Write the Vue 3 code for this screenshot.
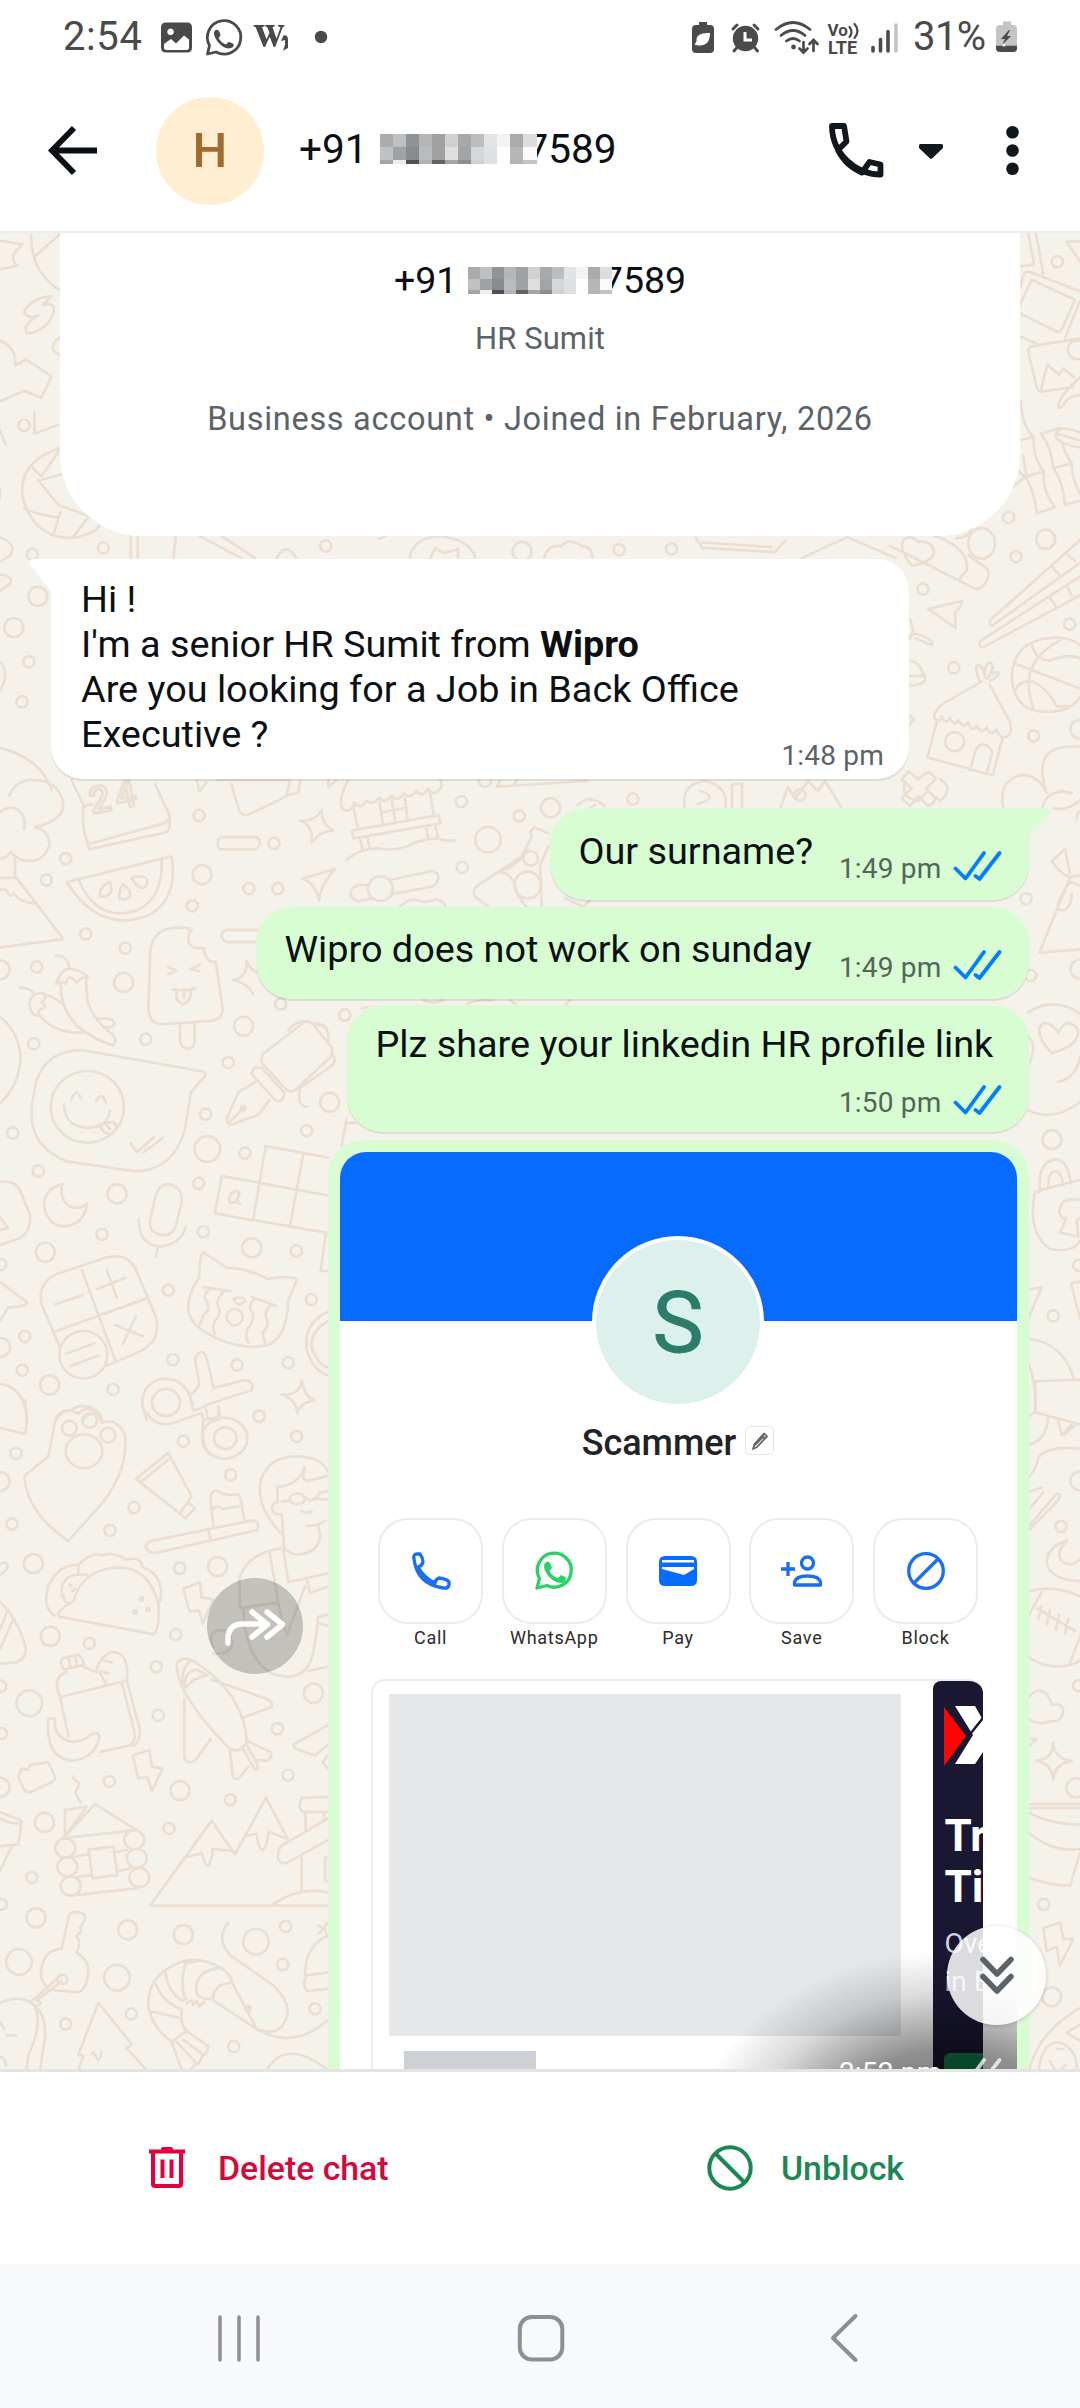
<script setup>
const mosaicTones = [
  ['#a9abad', '#bdbfc1', '#8f9396', '#b4b6b8', '#9fa1a3', '#d0d1d3', '#a6a8aa', '#bbbdbf', '#e2e3e5', '#f3f3f4', '#a9abad', '#dcddde'],
  ['#bfc1c3', '#a0a1a3', '#888c90', '#b9bbbd', '#9fa1a3', '#dfdfe0', '#a3a4a6', '#d5d7d9', '#dfe0e2', '#fefefe', '#b5b7b9', '#fafafa'],
  ['#a2a4a6', '#ededed', '#4d5258', '#b0b2b4', '#5f6468', '#a3a5a7', '#8b8e91', '#cfd1d3', '#dedfe1', '#fefefe', '#b2b4b6', '#c2c3c5'],
]

// Each zone holds doodles drawn in its own units; sx and sy are units per pixel.
const zones = [
  {
    x: 0, y: 780, sx: 3, sy: 2.45,
    small: [[597, 87], [822, 155], [197, 193], [139, 245], [747, 266], [833, 266], [577, 308], [257, 377], [376, 412], [110, 458], [842, 549], [1034, 576], [101, 646], [437, 635], [685, 692], [617, 819], [38, 865], [920, 859], [735, 914], [115, 958], [596, 988], [306, 1113], [610, 1107], [889, 1154], [505, 1250], [934, 1273], [74, 1363], [67, 1446], [519, 1420], [711, 1433], [865, 1428], [339, 1493], [777, 1558], [2, 1187]],
    mid: [[606, 232], [371, 496], [731, 603], [989, 790], [351, 1014], [136, 1157], [755, 1146], [149, 1482], [0, 465], [2, 1390]],
    large: [[622, 904]],
    paths: [
      'M27 38Q50 0 95 0Q180 0 190 60Q190 100 105 115Q150 125 148 160Q130 205 72 197Q45 190 32 175Q20 192 0 193M0 78Q20 65 40 68Q80 80 73 120',
      'M45 190V235L190 390L0 410M0 240H48M0 270Q15 262 22 275Q30 290 42 278Q60 300 108 303',
      'M215 0L250 62Q245 120 262 152Q266 158 275 155L495 105Q512 98 508 85L465 10M262 152L268 170L500 128Q514 120 508 85M250 65L275 60',
      'M200 250L515 187Q535 290 450 330Q300 380 200 250M235 243Q290 350 410 320Q490 290 485 195M330 250Q298 258 300 285Q325 290 335 270ZM368 255Q355 275 358 290Q375 298 392 285Q390 265 368 255ZM395 240Q410 265 430 265Q448 255 440 242Q420 230 395 240Z',
      'M575 365Q445 345 450 440L445 560Q448 600 490 598L635 590Q672 585 667 555L647 445Q620 450 610 412Q565 415 565 390Q565 375 575 365M540 598V640Q545 658 562 658Q583 658 584 640V596M503 457L530 467L505 475M600 452L572 463L598 469M518 513Q550 518 585 511M530 515V535Q538 549 552 549Q572 545 573 514M552 517V533',
      'M168 430Q205 430 208 462M168 500Q185 460 210 462Q245 465 265 485Q245 480 235 492Q230 502 218 485Q200 480 197 500Q185 492 168 500M182 500Q180 560 235 605Q290 640 340 650Q350 640 340 625Q280 590 262 540L258 490M60 508Q90 510 100 522M128 523Q95 520 88 545Q90 578 120 578Q110 565 125 560Q145 555 125 545Q145 530 128 523Q160 530 190 550M120 578Q170 625 255 618M290 585Q345 580 343 600Q335 608 320 605',
      'M250 662L600 713Q622 715 615 725L573 765L555 855Q520 960 400 958L205 935Q85 900 95 800L108 740Q140 660 250 662M192 795Q195 850 262 852Q325 850 330 810M215 783Q228 750 243 780M288 788Q305 760 318 790M298 848Q325 835 345 840Q355 850 340 865Q320 875 298 848M318 843L330 856M392 890L410 912L462 875M430 912L488 878',
      'M915 592L790 670Q780 680 787 695L855 755Q870 768 885 760L990 680Q1000 670 995 655L940 600Q928 590 915 592M945 598Q990 600 985 638M1000 675Q1010 690 995 700L900 755Q890 800 920 800M785 705Q760 700 755 720L820 780Q838 795 852 775V765L785 705M765 740L715 765L680 830Q680 848 700 843L775 820L808 785M690 837L730 804M736 804A6 6 0 1 0 724 804A6 6 0 1 0 736 804',
      'M188 990Q130 1000 133 1048Q145 1095 200 1093Q255 1085 260 1038Q225 1060 195 1035Q178 1010 188 990M465 1025Q475 988 508 990Q550 1000 545 1035L530 1085Q520 1118 485 1115Q445 1108 450 1080ZM417 1075Q415 1140 480 1143Q540 1140 558 1095M475 1143L467 1168M0 985Q45 980 60 1005L90 1065Q95 1105 60 1122L0 1140M0 1072L25 1098L0 1103',
      'M797 897L985 925M797 897L760 1076M665 970L985 1018M665 970L645 1062L985 1110M910 915L870 1093M978 1110L962 1203H985M705 1008Q680 1018 690 1035Q715 1040 718 1010Q690 1000 688 1030M718 1010Q705 1040 722 1038M1040 830L1025 895M1040 840H1065',
      'M290 1178Q375 1150 405 1195L465 1310Q490 1370 420 1400L320 1435M290 1178L170 1210Q110 1235 125 1285L180 1390M245 1200L345 1420M158 1353L440 1270M165 1285L248 1262M292 1247L376 1220M320 1200L350 1267M345 1335L428 1363M408 1315L368 1382M322 1408A72 58 0 1 0 178 1408A72 58 0 1 0 322 1408M200 1405L283 1380M212 1436L295 1410',
      'M680 1195L610 1157Q600 1160 597 1220Q530 1300 600 1345Q700 1400 800 1385Q860 1370 865 1275L890 1225Q888 1212 802 1222Q740 1195 680 1195M612 1243L690 1252M756 1267L828 1288M625 1250Q605 1265 622 1280Q632 1300 610 1310Q605 1330 595 1338M672 1252Q645 1275 655 1290Q665 1310 645 1325Q635 1345 645 1358M765 1270Q740 1290 758 1305Q765 1325 742 1345Q735 1370 745 1378M812 1285Q790 1305 800 1320Q810 1335 788 1355L795 1380M700 1270Q735 1265 735 1277Q715 1295 700 1270M728 1316A24 20 0 1 0 680 1316A24 20 0 1 0 728 1316',
      'M650 0H870L860 40L745 85Q725 90 715 70L695 10M860 38L895 30L900 0M965 73Q950 100 900 100Q940 110 935 153Q960 125 1000 124Q965 110 965 73M905 242L1005 218Q960 260 957 295Q945 250 905 242M665 140H765Q780 142 780 155Q775 170 760 170H665Q652 168 653 155Q655 142 665 140M800 367H680Q665 370 665 382Q668 395 685 397H800M740 445Q742 485 698 490Q740 495 760 525M740 445Q750 465 780 475M590 0L598 28L620 5',
      'M598 1480L585 1420Q590 1400 610 1402Q620 1405 640 1490L735 1470Q765 1475 755 1495L615 1532L625 1568M598 1480Q590 1495 570 1508Q540 1460 480 1468Q420 1485 428 1535L440 1568M570 1508L580 1545L615 1535M655 1535V1568M540 1525A42 33 0 1 0 456 1525A42 33 0 1 0 540 1525M905 1470Q900 1510 845 1505Q890 1520 892 1552Q900 1525 945 1520Q912 1510 905 1470M985 1302Q910 1330 920 1395Q940 1450 985 1458M985 1325Q930 1350 935 1390Q950 1430 985 1440M165 1568Q180 1540 215 1545Q230 1530 265 1535Q305 1545 305 1568M250 1568Q260 1550 285 1555',
      'M0 580Q60 620 62 685Q55 750 0 792M0 1230L82 1280Q80 1290 25 1292L0 1325M0 1478Q75 1490 82 1568',
    ],
    balls: [[262, 801, 110, 88]],
  },
  {
    x: 0, y: 1400, sx: 3, sy: 2.306,
    small: [[777, 38], [550, 95], [890, 84], [48, 123], [692, 173], [402, 248], [36, 286], [330, 301], [539, 388], [268, 561], [527, 541], [469, 615], [475, 727], [832, 758], [328, 880], [864, 865], [691, 922], [507, 988], [95, 1101], [857, 1214], [848, 1302], [197, 1439], [394, 1416], [701, 1491], [945, 1404], [2, 660], [4, 769], [4, 1163]],
    mid: [[0, 188], [100, 377], [653, 384], [151, 545], [940, 676], [540, 901], [133, 974], [108, 1194], [383, 1222], [550, 1233], [0, 893]],
    large: [[88, 699], [57, 1296], [351, 1332], [768, 1249]],
    paths: [
      'M205 325Q80 260 73 175L145 130L165 50Q195 10 235 32Q275 0 305 52Q350 40 375 80Q385 160 310 235ZM0 65L75 78Q85 50 75 0M610 45Q600 100 630 125M440 30Q470 65 520 53L605 30L610 45L660 40L655 15M705 88',
      'M505 122L407 182L540 262L575 222ZM420 190L510 135M548 250L540 262L555 273L585 250L568 238M455 325L755 278Q780 278 773 300L465 353Q435 350 437 335Q445 327 455 325M625 300L632 325M640 290L632 230Q630 205 655 210Q665 220 715 218Q725 225 725 245L735 280M640 250Q655 240 670 252Q700 245 728 245',
      'M165 498Q125 480 145 430Q170 380 235 380Q270 350 310 358Q340 350 380 368Q425 360 427 385Q480 400 483 440Q485 460 475 470Q480 530 460 540L180 500Q160 490 220 465Q240 400 330 388Q450 375 478 480M185 450Q180 405 235 403H260M190 450Q190 470 210 468M235 380V403M208 425L215 430M218 440L226 435',
      'M550 435L600 420L605 455L640 460L608 515L597 485L568 488ZM398 820L448 807L455 845L488 850L455 902L442 870L415 872ZM55 870L65 850L85 853L90 842L145 835L165 870Q165 880 150 883L90 905Q75 905 70 895ZM218 868Q225 880 238 883Q235 895 225 905Q232 915 242 928',
      'M180 685L365 650L405 770Q405 795 380 798L300 812M180 685L205 775M365 650L380 645L418 755Q425 785 400 798M172 665Q165 635 200 628L190 620Q175 600 190 595L235 588Q255 600 250 615L290 628Q290 600 330 582Q385 575 382 640M172 665L182 690M300 630L318 655M308 600L335 605M302 625L325 630M190 622L245 612M205 592L212 618M225 590L232 615M145 735H165Q160 780 215 788Q250 790 275 770Q295 765 298 775Q290 825 215 832Q135 825 145 735',
      'M530 610Q540 590 575 600Q660 640 700 690Q740 740 740 790Q720 815 690 805Q530 680 530 610M555 665Q550 625 590 622Q610 630 622 635Q580 640 555 665M575 600Q545 612 548 650M635 645L805 690Q820 700 815 708L730 732M553 690V825Q560 840 585 832L632 782M690 810L698 868Q705 878 718 872L745 845M740 785L812 812Q818 825 800 832L765 830M725 800L765 852Q775 855 772 840L740 795',
      'M195 945L260 938L195 1005ZM190 1010L285 932L410 992ZM226 1033A30 22 0 1 0 166 1033A30 22 0 1 0 226 1033M232 1077A30 22 0 1 0 172 1077A30 22 0 1 0 232 1077M242 1121A30 22 0 1 0 182 1121A30 22 0 1 0 242 1121M433 1014A30 22 0 1 0 373 1014A30 22 0 1 0 433 1014M440 1057A30 22 0 1 0 380 1057A30 22 0 1 0 440 1057M448 1101A30 22 0 1 0 388 1101A30 22 0 1 0 448 1101M265 1037L340 1030L352 1095L278 1103ZM215 1053L268 1048M342 1043L380 1038M232 1100L275 1095M350 1087L388 1080M215 1143L420 1125',
      'M983 1166H450L635 970L705 1048L798 917L865 1015M555 1055L605 1045Q615 1075 625 1075Q640 1050 637 1035L695 1040M735 1005L770 1000Q775 1038 790 1038Q805 1020 805 995L855 1010M983 965L840 1030Q820 1070 860 1068L983 1015M905 1055V1130M815 1165Q900 1120 983 1135M983 950H910Q890 940 905 918L983 915M917 950V990M972 955V970M983 1055H975V1110H983',
      'M185 1265L208 1185Q230 1175 255 1188Q255 1205 240 1215Q250 1225 230 1235Q245 1250 230 1275Q275 1295 263 1330Q255 1370 220 1365L150 1360Q115 1340 125 1310Q130 1270 185 1265M110 1385L185 1340M105 1380L180 1328M90 1388L103 1380L123 1390L108 1400ZM202 1336A15 11 0 1 0 172 1336A15 11 0 1 0 202 1336M0 1390Q60 1370 103 1395Q130 1440 85 1510L80 1545M103 1395Q140 1420 135 1470L120 1545M0 1435L12 1450M20 1465H48M0 1515Q15 1515 18 1535M235 1510L295 1390L395 1485L380 1495L440 1545M235 1510L250 1512L235 1545M275 1508Q285 1500 287 1515Q300 1530 303 1505',
      'M530 1300Q590 1280 650 1305Q695 1320 695 1342L770 1450L640 1385Q635 1365 660 1350L695 1342M530 1300Q440 1330 445 1400Q460 1450 515 1480L545 1545M555 1300Q540 1350 555 1380M497 1320Q500 1360 545 1385L560 1380M468 1348Q490 1390 545 1405M600 1293L555 1300M650 1310Q580 1320 590 1370Q610 1385 637 1380M455 1410L540 1425M545 1405Q540 1440 560 1455L515 1480M560 1455L625 1490Q625 1505 610 1510L550 1475M530 1480L590 1530L570 1545M610 1510L595 1530M685 1205Q645 1240 690 1280L820 1350Q890 1400 845 1445Q820 1465 770 1450M770 1450Q880 1500 983 1430M800 1545Q860 1470 983 1545M560 1390L575 1385L580 1395L590 1385L598 1398L612 1388M983 1235Q915 1260 915 1325M983 1320L920 1327Q905 1345 920 1363L983 1358M955 1212L970 1220L957 1230M983 1205L972 1215L983 1240',
      'M845 310Q760 240 785 180Q810 130 890 130Q965 130 983 165M830 200Q835 215 832 235Q810 240 820 258Q825 265 845 263Q850 300 852 340Q880 365 920 352Q955 345 960 315L955 290M830 200Q890 200 915 155Q900 185 925 187L983 175M845 235L870 232M915 228A23 12 0 1 0 869 228A23 12 0 1 0 915 228M918 225L930 232L950 225M983 210Q950 212 950 228L983 230M905 255Q915 263 935 257M920 290Q945 292 975 280M720 480L718 410Q745 350 850 342L865 420L983 400M808 350L845 510L862 540L915 430M920 410L930 445L983 430M720 480L832 468M730 480Q735 600 820 632Q930 660 945 560L955 500L983 495M955 515L983 520M925 625L983 615M640 570Q620 540 655 530Q690 530 697 560Q690 590 640 585',
      'M983 750L880 795Q880 805 900 808L945 820L983 795M983 820L968 835L983 850M0 378Q30 370 20 390L0 405M0 465Q50 500 77 570Q80 595 50 605L0 608M20 490L0 530M40 505L0 575M0 950L65 970L55 1025L0 1028M0 965Q30 980 65 975M35 1030L0 1085',
    ],
    balls: [[208, 65, 22, 17], [269, 47, 22, 17], [324, 81, 22, 17], [252, 118, 55, 39], [676, 88, 34, 25], [674, 88, 68, 47]],
  },
  {
    x: 220, y: 770, sx: 3, sy: 3,
    small: [[724, 95], [898, 138], [727, 292], [182, 702], [374, 735]],
    mid: [[992, 113]],
    large: [[804, 209]],
    paths: [
      'M385 27Q340 120 385 122Q405 110 402 98Q420 120 440 92Q460 110 477 82Q495 105 515 76Q530 100 552 70Q570 90 588 62Q605 85 625 57Q640 80 660 58Q670 40 660 27M400 110L415 180M630 65L642 140M395 182L655 135L662 160L402 205ZM478 95L488 160M515 88L525 150M555 85L562 145M483 128L560 113M420 205L428 240M442 202L450 238M618 170L625 205M645 165L653 200M380 270Q420 235 470 235Q530 245 570 225Q610 205 650 205Q670 215 705 210',
      'M450 345L415 345Q388 355 392 375Q400 395 420 393L455 385M510 330L635 303Q655 305 655 325Q650 345 635 350L515 373M518 356A37 37 0 1 0 444 356A37 37 0 1 0 518 356',
      'M985 190L945 173Q925 180 935 200L905 260L775 345Q755 360 765 380L805 410M985 230L960 285L965 410M840 305Q870 310 885 345Q890 380 920 410M840 305Q890 290 925 240M540 410Q570 380 600 392Q620 400 640 390Q665 385 677 410M1072 105Q1110 70 1155 108M1110 115L1125 105M1035 385L1090 410L1110 390M610 690Q640 705 670 690M740 705Q750 690 820 690M870 690L890 705M1050 690L1035 705M205 780Q240 740 280 760Q310 760 320 775M840 30L832 50L1100 33M890 30L882 46M775 30Q780 55 800 50Q815 45 812 30M325 30V52L350 30M425 715L440 712',
    ],
    balls: [[932, 265, 22, 22], [923, 345, 40, 40]],
  },
  {
    x: 620, y: 779, sx: 1, sy: 1,
    small: [[13, 20], [180, 16]],
    mid: [],
    large: [],
    paths: ['M65 30Q60 5 85 2Q110 8 105 30M80 12Q100 18 78 25M112 28V5H122V28M160 30L168 8L175 20L188 2L198 12L205 2L215 18L222 30M285 2Q280 18 298 22L308 12L320 22Q335 10 320 0'],
    balls: [],
  },
  {
    x: 0, y: 230, sx: 1.452, sy: 2.8,
    small: [[35, 547], [150, 890], [47, 908], [42, 1209], [32, 1321], [473, 885], [899, 895], [975, 893]],
    mid: [[55, 1026], [20, 1113], [758, 900]],
    large: [],
    paths: [
      'M0 30L33 40Q10 75 25 100L0 110M45 15Q45 120 88 170M88 10L50 75M75 185Q45 190 35 230Q40 250 55 240Q30 270 40 290Q70 280 78 230Q80 200 62 210L75 185M88 300Q65 330 88 350M0 310Q25 330 22 380L38 362L75 410L60 470L35 450L0 480M50 510V570L85 545M88 610Q25 650 33 750Q50 865 105 862Q140 855 148 815M45 660L60 690L85 620M55 700L85 770L148 815M35 780Q60 800 85 805M88 685L60 700M88 790L78 850M105 862L130 800M0 560L8 600M0 725V750M0 860Q25 880 15 910L0 930M0 965Q20 970 15 990L0 1010M0 1210Q15 1240 0 1290M0 1450Q60 1480 75 1568',
      'M190 857V918M200 857V918M255 857L252 918M290 857L350 918M322 857L370 918M402 918Q415 870 430 918M550 865L560 857M595 918Q600 860 640 857Q685 870 690 918M625 918L632 890L645 905L665 893V918M790 918Q795 880 815 885Q825 860 845 885Q860 885 860 918M1010 860L1020 890L1125 902L1140 870M1020 875L1120 888M1165 918L1230 860L1300 918',
    ],
    balls: [],
  },
  {
    x: 890, y: 230, sx: 3, sy: 2.613,
    small: [[502, 83], [356, 751], [378, 853], [99, 938], [539, 1030], [191, 1144], [431, 1322]],
    mid: [[467, 808], [562, 313], [570, 1304], [194, 1337]],
    large: [],
    paths: [
      'M415 10L432 90L390 95M438 10L460 115M570 160L420 110Q405 105 400 120L390 150M425 130L555 182L515 260Q510 268 500 265L390 218M425 130L390 195M570 185L525 283M390 278L440 297M530 30H570M530 30L570 82M415 315Q415 305 430 303L570 283M415 320L440 410Q445 425 460 422L550 410M452 420L472 352L507 378Q510 375 520 362L552 385M570 385Q500 440 505 465Q515 465 525 450Q545 430 570 432',
      'M392 445Q395 510 430 540L390 550M430 540Q430 600 462 630L400 647M400 590L410 650Q435 690 440 740L495 725Q455 680 462 630M385 630L405 645L370 670M510 517L453 532Q485 570 490 622L545 610Q520 580 518 555M490 622Q520 660 525 718L570 707M545 610Q545 650 570 690M497 540Q500 515 530 520Q550 520 570 530M497 540Q510 560 570 568M500 532L570 550',
      'M0 825L250 935Q280 945 295 905Q300 890 285 880L235 850M130 798Q240 830 230 890L207 912M200 805Q235 805 245 780M38 815Q55 790 85 815Q130 810 132 845Q120 870 65 877Q30 840 38 815ZM570 810L300 1020Q295 1035 310 1032L570 870M487 880L512 905M527 845L555 865M570 905L270 1075Q265 1090 280 1090L570 955M480 962L500 985M530 930L545 955M115 990L215 970Q220 980 195 1000L197 1040ZM57 1015Q80 1050 57 1070M57 1060Q80 1045 125 1075Q135 1085 115 1082L75 1067M57 1125Q95 1130 98 1165H57M98 1155Q125 1190 57 1190M57 1268L72 1278L57 1295',
      'M570 1085Q530 1055 450 1070Q370 1090 365 1165Q370 1250 450 1258Q540 1265 570 1220M372 1132Q470 1165 570 1198M510 1073Q380 1130 430 1250M425 1080Q435 1125 480 1125Q540 1105 570 1120M378 1200Q390 1175 430 1180Q475 1200 500 1245L540 1245',
      'M275 1180L155 1240Q120 1270 140 1280Q155 1285 155 1270Q165 1295 180 1275Q195 1300 205 1280Q220 1305 235 1287Q245 1315 260 1295Q275 1320 290 1300Q300 1325 320 1305Q330 1330 345 1325Q370 1320 360 1285L300 1190M140 1285L112 1378L308 1425L337 1330M240 1412L255 1365Q265 1340 285 1345Q310 1355 305 1370L290 1420M270 1180Q250 1140 265 1137Q280 1140 285 1170Q280 1135 300 1130Q320 1140 290 1172Q310 1150 328 1157Q320 1170 300 1178M85 1435L110 1418Q120 1412 137 1435L108 1460L137 1485Q130 1500 115 1505L85 1480L60 1505L35 1485L65 1460L35 1435L55 1415Z',
      'M340 1510Q325 1440 390 1425Q440 1420 470 1470Q440 1390 480 1365Q510 1345 570 1350M457 1510Q465 1470 520 1467L545 1472M570 1520Q560 1525 560 1540',
    ],
    balls: [[275, 819, 40, 40]],
  },
  {
    x: 1000, y: 800, sx: 3, sy: 1.225,
    small: [[78, 121], [92, 215], [160, 632], [183, 890], [236, 570], [236, 1085], [131, 1353]],
    mid: [[156, 416], [240, 207], [240, 834], [228, 1210], [155, 1466]],
    large: [],
    paths: [
      'M240 0Q200 15 160 10M155 75Q180 90 210 95L240 92M155 75L195 60L210 90M210 95L118 187L240 183M240 105L210 100Q160 130 180 135Q215 135 215 115M85 260Q160 240 240 262M85 380Q160 395 240 370M85 290Q115 300 85 325M155 310Q100 285 125 275Q150 270 175 285Q200 265 232 280Q245 300 155 310M240 315Q230 340 175 345',
      'M105 480L240 465M105 480Q80 530 150 550Q220 555 240 540M120 480Q110 445 165 440Q205 440 212 470M145 475Q145 455 165 455Q185 455 190 472M240 490Q180 485 178 505Q185 515 200 512L180 530L235 535L230 515L240 512M85 600L125 597L85 635M240 590L213 592L240 635M85 660Q190 665 220 708M240 710L105 712Q110 740 105 750L240 765M85 690Q110 715 105 750L85 755M85 790Q140 785 145 755M85 830Q110 820 115 805Q150 790 240 795M175 760L185 778L215 765M190 778L225 766',
      'M85 848L125 842M85 870L130 848M85 890L170 850Q190 850 170 860L85 895M202 907Q140 915 140 935Q150 955 240 957M202 907Q170 920 180 930Q205 942 240 930M85 970Q150 960 240 975M85 1050Q160 1070 240 1055M125 970L85 1000M240 1025L210 1057M110 990L225 1018M125 987L115 1003M150 992L140 1010M178 998L168 1016M205 1003L195 1022M85 1100Q110 1085 140 1095Q155 1105 155 1108Q190 1105 190 1118Q180 1130 160 1128Q110 1135 85 1125',
      'M85 1150L110 1150L85 1160M158 1155Q160 1175 108 1177Q155 1180 160 1200Q165 1180 215 1177Q165 1175 158 1155M85 1230H240M85 1240Q150 1255 240 1255M85 1265Q160 1290 240 1285M85 1320Q150 1330 210 1330L240 1290M240 1235H85M130 1382L180 1375L190 1395L220 1395L180 1428L170 1405L140 1410ZM85 1560Q110 1510 240 1480M115 1565Q120 1520 180 1522Q240 1530 230 1568M150 1545Q170 1565 195 1550M170 1530H190M240 1500L200 1510L240 1520',
    ],
    balls: [],
  },
]

const actions = ['Call', 'WhatsApp', 'Pay', 'Save', 'Block']
const replies = [
  { text: 'Our surname?', time: '1:49 pm', kind: 'first' },
  { text: 'Wipro does not work on sunday', time: '1:49 pm', kind: 'second' },
  { text: 'Plz share your linkedin HR profile link', time: '1:50 pm', kind: 'third' },
]
</script>

<template>
  <div class="screen">
    <div class="status">
      <span class="clock">2:54</span>
      <svg class="s-left" viewBox="158 14 180 48" width="180" height="48">
        <path fill="#4a4a4a" fill-rule="evenodd" d="M166 22.500h21q5 0 5 5v20q0 5-5 5h-21q-5 0-5-5v-20q0-5 5-5zM164 44v3.500q0 2.500 2.500 2.500h20q2.500 0 2.500-2.500v-8l-5-4-8 8-5-4.500zM170.500 28.500a3.300 3.300 0 1 0 .1 0z" />
        <path fill="none" stroke="#4a4a4a" stroke-width="2.800" stroke-linejoin="round" d="M207.500 54l2-8.500a16.700 16.700 0 1 1 6.500 6.500z" />
        <path fill="#4a4a4a" d="M214.500 31q3-3 5 1l1 3q0 1-2 3 3 5 7.500 6.500l2.500-2.500q1-.5 5 2 1 4-5 4.500-5 0-11-7-5-7-3-10.500z" />
        <path fill="#4a4a4a" d="M253.500 25h11v1.300l-2.500.9 4.500 12 3-6.500-2.300-5.500-2-.9V25h9.500v1.300l-2.200.9 4 11.500 4-11.500-2.500-.9V25h6.500v1.300l-1.800.9-7.500 19.800h-1.500l-4-10.200-4.700 10.200h-1.500l-7.800-19.800-2.200-.9zM283.500 35.500q4-1 4.500 4v8.500l-5 2.500 2-5.500v-5l-4 1z" />
        <circle cx="321" cy="37" r="6.200" fill="#4a4a4a" />
      </svg>
      <svg class="s-right" viewBox="690 18 214 40" width="214" height="40">
        <g fill="#4a4a4a">
          <path fill-rule="evenodd" d="M699 22h8v3h3q4 0 4 4v20q0 4-4 4h-14q-4 0-4-4V29q0-4 4-4h3zM710 33q-13-1-13.500 6.500v2l-2 3 3.500 1q12 1 12-12.500z" />
          <circle cx="745.500" cy="38.500" r="12.700" />
        </g>
        <path d="M745 32v8h7" fill="none" stroke="#fff" stroke-width="3" />
        <g fill="none" stroke="#4a4a4a" stroke-width="2.900" stroke-linecap="round">
          <path d="M733 29l4-4M758 29l-4-4M736.500 48l-2.500 3M755 48l2.500 3" />
          <path d="M776 29.500q17-14 34 0M781 35.500q12-10 24 0M786.500 41q6.500-5 13 0M803.500 42v10M799.500 48.500l4 4 4-4M813.500 51V41M809.500 44l4-4 4 4" stroke-width="2.700" />
          <path d="M849.500 27q4 5 0 10M854.500 24q6 7 0 14" stroke-width="2.200" />
          <path d="M873 47.500v3.500M880.500 39.500V51M888 31.500V51" stroke-width="3.600" />
          <path d="M896 25v26" stroke="#c4c4c4" stroke-width="3.600" />
        </g>
        <circle cx="793.500" cy="47" r="2.400" fill="#4a4a4a" />
        <text x="827.500" y="36" font-size="17" class="net">Vo</text>
        <text x="828" y="53.500" font-size="18" textLength="29" class="net">LTE</text>
      </svg>
      <span class="percent">31%</span>
      <svg class="batt" viewBox="994 18 26 40" width="26" height="40">
        <path fill="#c4c4c4" d="M1003 21.500h8v3.500h2q4 0 4 4v16h-21V29q0-4 4-4h3z" />
        <path fill="#4a4a4a" d="M996 45.500h21v3q0 3.500-4 3.500h-13q-4 0-4-3.500z" />
        <path fill="#4a4a4a" d="M1009 30l-8 9h4l-3 6 9-9h-4l3-6z" />
        <circle cx="1004" cy="45" r="1.500" fill="#fff" />
      </svg>
    </div>

    <header class="top">
      <svg class="back" viewBox="46 124 54 54" width="54" height="54">
        <path d="M97 150.500H54M74 128L52 150.500 74 173" fill="none" stroke="#0b1014" stroke-width="5.800" />
      </svg>
      <div class="avatar">H</div>
      <div class="number big">
        <span>+91</span>
        <span class="mosaic"><i v-for="(c, i) in mosaicTones.flat()" :key="i" :style="{ background: c }" /></span>
        <span class="tail-digits">7589</span>
      </div>
      <svg class="top-icons" viewBox="820 116 210 70" width="210" height="70">
        <path fill="none" stroke="#11181d" stroke-width="5.800" stroke-linejoin="round" d="M833 126h12l2.500 15.500-8.500 8.500C845 161 851 167 863 172.500l7.500-10.500 11 2.500V174.500C856 174.500 833 153 833 126zM839 150l2.500 4M863 172.500l-4-2" />
        <path fill="#11181d" stroke="#11181d" stroke-width="3" stroke-linejoin="round" d="M921.500 145.500h21v2l-10.500 10-10.500-10z" />
        <g fill="#11181d"><circle cx="1013.500" cy="132.300" r="6.300" /><circle cx="1013.500" cy="150.500" r="6.300" /><circle cx="1013.500" cy="168.800" r="6.300" /></g>
      </svg>
    </header>

    <main class="chat">
      <svg class="wall" viewBox="0 233 1080 1837" width="1080" height="1837">
        <g v-for="(z, i) in zones" :key="i" :transform="`translate(${z.x} ${z.y}) scale(${1 / z.sx} ${1 / z.sy})`">
          <path v-for="(p, j) in z.paths" :key="'p' + j" :d="p" />
          <ellipse v-for="(b, j) in z.balls" :key="'b' + j" :cx="b[0]" :cy="b[1]" :rx="b[2]" :ry="b[3]" />
          <ellipse v-for="(d, j) in z.small" :key="'s' + j" :cx="d[0]" :cy="d[1]" :rx="5.6 * z.sx" :ry="5.6 * z.sy" />
          <ellipse v-for="(d, j) in z.mid" :key="'m' + j" :cx="d[0]" :cy="d[1]" :rx="9.5 * z.sx" :ry="9.5 * z.sy" />
          <ellipse v-for="(d, j) in z.large" :key="'l' + j" :cx="d[0]" :cy="d[1]" :rx="12.8 * z.sx" :ry="12.8 * z.sy" />
        </g>
        <text x="92" y="814" transform="rotate(-11 92 814)" class="day">24</text>
        <g class="solid"><circle cx="141.500" cy="1599" r="3" /><circle cx="135" cy="1612" r="3" /><circle cx="148" cy="1609.500" r="3" /><circle cx="248" cy="2008.500" r="4" /></g>
      </svg>

      <section class="info">
        <div class="number mini">
          <span>+91</span>
          <span class="mosaic"><i v-for="(c, i) in mosaicTones.flat()" :key="i" :style="{ background: c }" /></span>
          <span class="tail-digits">7589</span>
        </div>
        <div class="who">HR Sumit</div>
        <div class="joined">Business account • Joined in February, 2026</div>
      </section>

      <section class="msg received">
        <svg class="tip" viewBox="0 0 24 32" width="24" height="32"><path fill="#fff" d="M24 0H4Q-2 1 2 7L22 32H24z" /></svg>
        <p>Hi !<br>I'm a senior HR Sumit from <b>Wipro</b><br>Are you looking for a Job in Back Office<br>Executive ?</p>
        <span class="time">1:48 pm</span>
      </section>

      <section v-for="r in replies" :key="r.text" class="msg sent" :class="r.kind">
        <svg v-if="r.kind === 'first'" class="tip" viewBox="0 0 24 32" width="24" height="32"><path fill="#d8fdd2" d="M0 0H20Q26 1 22 7L3 27V32H0z" /></svg>
        <p>{{ r.text }}</p>
        <span class="meta">
          <span class="time">{{ r.time }}</span>
          <svg class="ticks" viewBox="0 0 50 32" width="50" height="32"><path d="M2.500 18.500L12.500 28.500 31 3M22.500 26L26.500 29 46.500 3" fill="none" stroke="#027eff" stroke-width="3.800" stroke-linecap="round" stroke-linejoin="round" /></svg>
        </span>
      </section>

      <section class="shot-row">
        <div class="forward">
          <svg viewBox="0 0 60 44" width="60" height="44"><path d="M3 38V34Q3 19 18 19H42M27 7L42.500 19.500 27 32M42 7L57.500 19.500 42 32" fill="none" stroke="#fff" stroke-width="5.500" stroke-linecap="round" stroke-linejoin="round" /></svg>
        </div>
        <div class="frame">
          <div class="shot">
            <div class="banner" />
            <div class="face">S</div>
            <div class="name">
              <span>Scammer</span>
              <span class="pen"><svg viewBox="0 0 24 24" width="24" height="24"><path d="M5 20l1.500-5L16 4.500l3 3L9 18zM14 7l3 3M7 16l9-9" fill="none" stroke="#666" stroke-width="1.800" stroke-linejoin="round" /></svg></span>
            </div>
            <div class="actions">
              <div v-for="a in actions" :key="a" class="action">
                <div class="tile">
                  <svg viewBox="0 0 44 44" width="44" height="44" fill="none" stroke="#1a6ff0" stroke-width="3.300" stroke-linejoin="round">
                    <path v-if="a === 'Call'" d="M5 10Q4 5 8 5H11Q14 9 14 13Q13 17 9 18Q15 29 26 34Q26 31 30 29Q38 30 40 33V36Q39 40 34 39Q8 35 5 10Z" />
                    <g v-else-if="a === 'WhatsApp'" stroke="#2bd168">
                      <path d="M5 39L7.500 29.500A17 17 0 1 1 15 36.500Z" />
                      <path fill="#2bd168" stroke="none" d="M13 14Q16 11 18 14L20 19L17.500 22Q21 28 26 29L29 26Q34 28 34 29Q34 34 28 34Q21 33 15.500 26Q10 18 13 14Z" />
                    </g>
                    <path v-else-if="a === 'Pay'" stroke="none" fill="#086bff" fill-rule="evenodd" d="M9 7H35Q41 7 41 13V31Q41 37 35 37H9Q3 37 3 31V13Q3 7 9 7ZM6 11V13.500H38V11ZM6 18V20L28 26L38 20V18Z" />
                    <g v-else-if="a === 'Save'"><path d="M1 20H15M8 13V27" /><circle cx="27.500" cy="14" r="6" /><path d="M14.500 36V33Q16 27 27.500 27T40.500 33V36Z" /></g>
                    <g v-else><circle cx="22" cy="22" r="17.300" /><path d="M10 34L34 10" /></g>
                  </svg>
                </div>
                <span>{{ a }}</span>
              </div>
            </div>
            <div class="ads">
              <div class="blank"><div class="block" /><div class="line" /></div>
              <div class="promo">
                <svg viewBox="0 0 50 70" width="50" height="70"><path fill="#fb0505" d="M11 6V65L33 35z" /><path fill="#fff" d="M22 5H42L56 30 56 42 42 63H22L40 34z" /><path d="M38 32L54 12" stroke="#1a1733" stroke-width="2.500" /></svg>
                <div class="lead">Tr<br>Ti</div>
                <div class="sub">Ove<br>in E</div>
                <div class="cta" />
              </div>
            </div>
            <div class="shade" />
            <div class="shot-meta">
              <span class="time">2:52 pm</span>
              <svg viewBox="0 0 50 32" width="50" height="32"><path d="M2.500 18.500L12.500 28.500 31 3M22.500 26L26.500 29 46.500 3" fill="none" stroke="#fff" stroke-opacity=".75" stroke-width="3.800" stroke-linecap="round" /></svg>
            </div>
          </div>
        </div>
      </section>

      <button class="jump">
        <svg viewBox="0 0 40 44" width="40" height="44"><path d="M6 6.500L20 21 34 6.500M6 23.500L20 38 34 23.500" fill="none" stroke="#5b6368" stroke-width="5.500" stroke-linecap="round" stroke-linejoin="round" /></svg>
      </button>
    </main>

    <footer class="bar">
      <button class="del">
        <svg viewBox="0 0 38 44" width="38" height="44"><path fill="none" stroke="#e3003c" stroke-width="4" stroke-linejoin="round" d="M5 7V38Q5 40 7 40H31Q33 40 33 38V7M1 5.500H37M14.500 13.500V32M23.500 13.500V32" /><path d="M13 4V3Q13 1 15 1h8q2 0 2 2v1z" fill="#e3003c" /></svg>
        <span>Delete chat</span>
      </button>
      <button class="unb">
        <svg viewBox="0 0 46 46" width="46" height="46"><circle cx="23" cy="23" r="20.700" fill="none" stroke="#1b8755" stroke-width="4" /><path d="M8.500 8.500L37.500 37.500" stroke="#1b8755" stroke-width="4" /></svg>
        <span>Unblock</span>
      </button>
    </footer>
    <nav class="nav">
      <svg viewBox="210 2305 660 70" width="660" height="70" fill="none" stroke="#8e8f91" stroke-linecap="round" stroke-linejoin="round">
        <path d="M220 2317V2360M239 2317V2360M258 2317V2360" stroke-width="3.500" />
        <rect x="519.800" y="2317" width="42.500" height="42.500" rx="12" stroke-width="4" />
        <path d="M855.500 2316L833 2338 855.500 2360" stroke-width="4" />
      </svg>
    </nav>
  </div>
</template>

<style>
body { background: #fff; }
</style>

<style scoped>
* { box-sizing: border-box; }
p { margin: 0; }
button { border: 0; background: none; padding: 0; font: inherit; color: inherit; }
svg { display: block; flex: none; }
.screen { width: 1080px; height: 2408px; display: flex; flex-direction: column; font-family: Roboto, "Liberation Sans", sans-serif; color: #0b1014; overflow: hidden; background: #fff; }
.status { height: 76px; flex: none; display: flex; align-items: flex-start; color: #4a4a4a; font-size: 40px; line-height: 74px; padding-left: 63px; }
.clock { width: 95px; letter-spacing: .6px; }
.s-left { margin-top: 14px; }
.s-right { margin: 18px 0 0 352px; }
.net { fill: #4a4a4a; font-weight: 700; }
.percent { margin-left: 9px; width: 81px; letter-spacing: -.6px; }
.batt { margin-top: 18px; }
.top { height: 157px; flex: none; display: flex; align-items: center; border-bottom: 2px solid #ececec; padding: 0 50px 6px 46px; }
.avatar { width: 108px; height: 108px; border-radius: 50%; background: #ffeed2; color: #9f6b2e; display: grid; place-items: center; font-size: 49px; font-weight: 500; margin-left: 56px; }
.number { display: flex; align-items: center; }
.mosaic { display: grid; grid-template-columns: repeat(12, 1fr); position: relative; z-index: 1; }
.tail-digits { position: relative; }
.big { font-size: 40.500px; margin: -4px 0 0 35px; width: 520px; }
.big .mosaic { width: 157px; height: 30px; grid-template-rows: 13px 12.500px 4.500px; margin: 1px 0 0 12px; }
.big .tail-digits { margin-left: -11px; }
.mini { font-size: 37.500px; justify-content: center; line-height: 44px; }
.mini .mosaic { width: 144px; height: 27px; grid-template-rows: 12px 11.500px 3.500px; margin: 0 0 0 11px; }
.mini .tail-digits { margin-left: -10.500px; }
.chat { height: 1839px; flex: none; position: relative; overflow: hidden; background: #f5f2eb; border-bottom: 3px solid #e4e4e4; display: flex; flex-direction: column; }
.wall { position: absolute; left: 0; top: 0; fill: none; stroke: #eadfd2; stroke-width: 2.700px; stroke-linejoin: round; stroke-linecap: round; }
.wall path, .wall ellipse { vector-effect: non-scaling-stroke; }
.wall .solid { fill: #eadfd2; stroke: none; }
.day { font-size: 37px; font-weight: 500; letter-spacing: 5px; }
.info { position: relative; width: 960px; height: 303px; margin: 0 60px; background: #fff; border-radius: 0 0 82px 82px; text-align: center; color: #5b6368; padding-top: 25px; flex: none; }
.info .number { color: #0b1014; }
.who { font-size: 31px; line-height: 36px; margin-top: 18.500px; letter-spacing: .1px; }
.joined { font-size: 32.500px; line-height: 38px; margin-top: 43px; letter-spacing: .7px; }
.msg { position: relative; flex: none; border-radius: 36px; box-shadow: 0 2px 1px rgba(11, 20, 26, .1); font-size: 37.800px; line-height: 45px; }
.received { margin: 23px 0 0 51px; width: 858px; height: 220px; background: #fff; padding: 17.500px 25px 0 30px; display: flex; justify-content: space-between; border-radius: 0 32px 32px 32px; }
.time { font-size: 28px; line-height: 34px; color: #5b6368; white-space: nowrap; letter-spacing: .2px; }
.received .time { align-self: flex-end; padding-bottom: 6px; }
.received .tip { position: absolute; left: -22px; top: 0; }
.received p { width: 690px; white-space: nowrap; }
.sent { align-self: flex-end; margin-right: 51.500px; background: #d8fdd2; display: flex; justify-content: space-between; padding: 0 26px 0 29px; }
.sent p { white-space: nowrap; }
.sent .time { color: #52665a; }
.sent .tip { position: absolute; right: -21px; top: 0; }
.meta { display: flex; gap: 11px; align-items: flex-end; align-self: flex-end; }
.first { margin-top: 29px; width: 479px; height: 92px; padding-top: 20.500px; border-top-right-radius: 0; }
.second { margin-top: 6.500px; width: 773px; height: 92px; padding-top: 20px; }
.first .meta, .second .meta { height: 34px; margin-bottom: 14px; }
.ticks { margin-bottom: 4px; }
.third { margin-top: 6px; width: 682px; height: 127px; flex-direction: column; justify-content: flex-start; padding-top: 17.500px; }
.third .meta { margin-top: 17px; }
.shot-row { flex: none; margin: 8px 51.500px 0 207px; height: 940px; display: flex; justify-content: space-between; align-items: flex-start; position: relative; }
.forward { width: 96px; height: 96px; border-radius: 50%; background: rgba(80, 80, 80, .3); margin-top: 438.500px; display: grid; place-items: center; padding-top: 2px; }
.frame { width: 701px; height: 1100px; background: #d8fdd2; border-radius: 36px; padding: 12px; }
.shot { position: relative; height: 1060px; background: #fff; border-radius: 26px; overflow: hidden; display: flex; flex-direction: column; }
.banner { height: 169px; background: #086bff; flex: none; }
.face { width: 172px; height: 172px; flex: none; margin: -85px auto 0; position: relative; border-radius: 50%; border: 4px solid #fff; background: #dcf1ec; color: #2c7c6a; font-size: 86px; line-height: 165px; text-align: center; -webkit-text-stroke: 1px #2c7c6a; }
.name { display: flex; justify-content: center; align-items: center; gap: 9px; font-size: 36px; font-weight: 500; line-height: 44px; color: #222326; margin-top: 13.500px; }
.pen { width: 29px; height: 29px; border: 1.500px solid #e6e6e6; border-radius: 5px; display: grid; place-items: center; margin-top: -5px; }
.actions { display: flex; justify-content: space-between; padding: 0 39px; margin-top: 53px; }
.action { width: 104px; display: flex; flex-direction: column; align-items: center; font-size: 18px; line-height: 22px; color: #2b2b2b; letter-spacing: .7px; white-space: nowrap; }
.tile { width: 105px; height: 106px; border: 2px solid #ececec; border-radius: 30px; display: grid; place-items: center; margin-bottom: 3px; }
.ads { display: flex; margin: 30px 0 0 31px; width: 612px; height: 400px; border: 2px solid #ededed; border-right: 0; border-radius: 14px 14px 0 0; overflow: hidden; flex: none; justify-content: space-between; }
.blank { padding: 13px 0 0 16px; }
.block { width: 512px; height: 342px; background: #e5e7e9; }
.line { width: 132px; height: 40px; margin: 15px 0 0 15px; background: #cdd1d5; }
.promo { width: 50px; height: 400px; background: #1a1733; color: #fff; overflow: hidden; border-radius: 8px 0 0 0; padding-top: 20px; }
.lead { font-size: 44px; font-weight: 700; line-height: 50.500px; margin: 40px 0 0 12px; white-space: nowrap; }
.sub { font-size: 28px; line-height: 38px; margin: 13px 0 0 12px; white-space: nowrap; color: #d5d4de; }
.cta { width: 160px; height: 50px; border-radius: 6px; background: #12834e; margin: 52px 0 0 11px; }
.shade { position: absolute; right: 0; bottom: 0; width: 460px; height: 330px; background: radial-gradient(260px 200px at 393px 268px, rgba(0, 0, 0, .62) 0%, rgba(0, 0, 0, .44) 50%, rgba(0, 0, 0, .14) 78%, rgba(0, 0, 0, 0) 100%); }
.shot-meta { position: absolute; right: 14px; top: 904px; display: flex; gap: 11px; align-items: center; }
.shot-meta .time { color: #fff; }
.jump { position: absolute; right: 34px; top: 1692.500px; width: 99px; height: 99px; border-radius: 50%; background: rgba(255, 255, 255, .85); box-shadow: 0 1px 4px rgba(0, 0, 0, .2); display: grid; place-items: center; }
.bar { height: 192px; flex: none; display: grid; grid-template-columns: 1fr 1fr; background: #fff; font-size: 33.800px; font-weight: 500; }
.bar button { display: flex; align-items: center; }
.del { padding-left: 148px; gap: 32px; color: #d6083b; }
.unb { padding-left: 167px; gap: 28px; color: #1b8755; }
.nav { flex: 1; background: #f8f9fb; padding: 41px 0 0 210px; }
</style>
